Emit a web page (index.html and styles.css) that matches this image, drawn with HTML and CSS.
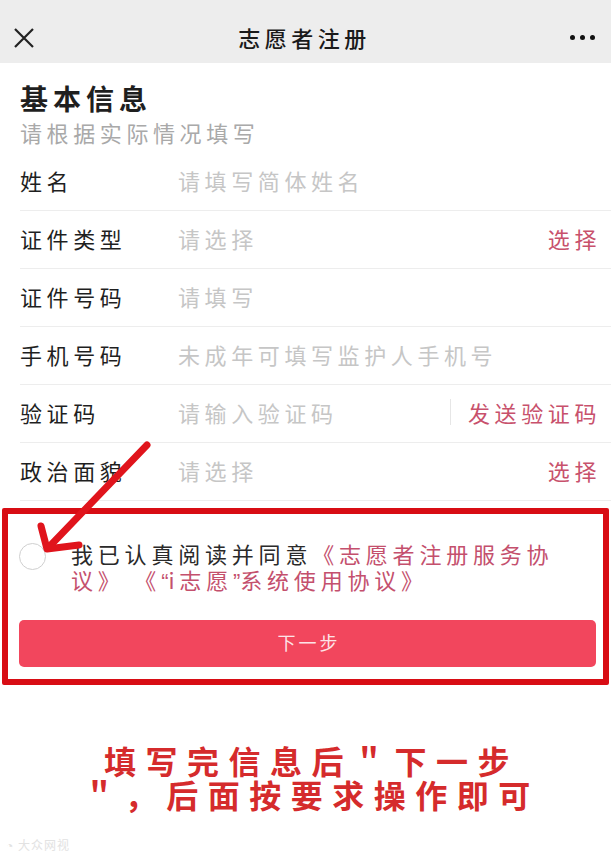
FILE: index.html
```html
<!DOCTYPE html>
<html lang="zh-CN">
<head>
    <meta charset="UTF-8">
    <meta name="viewport" content="width=device-width, initial-scale=1.0">
    <title>志愿者注册</title>
    <link rel="stylesheet" href="styles.css">
</head>
<body>
  <div class="topbar">
    <svg class="close" width="22" height="20" viewBox="0 0 22 20">
      <path d="M2 1 L20 19 M20 1 L2 19" stroke="#222" stroke-width="2.2" fill="none"/>
    </svg>
    <span class="title">志愿者注册</span>
    <span class="dots"><i></i><i></i><i></i></span>
  </div>

  <div class="intro">
    <h2>基本信息</h2>
    <p>请根据实际情况填写</p>
  </div>

  <!-- form rows -->
  <div class="rows">
    <div class="row">
      <span class="label">姓名</span>
      <span class="hint">请填写简体姓名</span>
    </div>
    <div class="row">
      <span class="label">证件类型</span>
      <span class="hint">请选择</span>
      <span class="action">选择</span>
    </div>
    <div class="row">
      <span class="label">证件号码</span>
      <span class="hint">请填写</span>
    </div>
    <div class="row">
      <span class="label">手机号码</span>
      <span class="hint">未成年可填写监护人手机号</span>
    </div>
    <div class="row">
      <span class="label">验证码</span>
      <span class="hint">请输入验证码</span>
      <span class="action send">发送验证码</span>
    </div>
    <div class="row">
      <span class="label">政治面貌</span>
      <span class="hint">请选择</span>
      <span class="action">选择</span>
    </div>
  </div>

  <div class="agree">
    <span class="radio"></span>
    <p class="agree-text">我已认真阅读并同意<span class="link">《志愿者注册服务协议》</span> <span class="link">《<span class="q">“</span>i志愿<span class="q">”</span>系统使用协议》</span></p>
  </div>
  <button class="next">下一步</button>

  <p class="caption">填写完信息后＂下一步<br>＂，后面按要求操作即可</p>
  <div class="watermark">◔ 大众网视</div>

  <!-- annotation overlays -->
  <div class="mark-box"></div>
  <svg class="mark-arrow" width="160" height="120" viewBox="0 440 160 120">
    <path d="M147 445 L48 548" stroke="#e0141c" stroke-width="7" stroke-linecap="round" fill="none"/>
    <path d="M41 526 L47 549 L79 545" stroke="#e0141c" stroke-width="7" stroke-linecap="round" stroke-linejoin="round" fill="none"/>
  </svg>
</body>
</html>
```

FILE: styles.css
```css
body {
  margin: 0;
  width: 611px;
  height: 858px;
  overflow: hidden;
  background: #fff;
  font-family: "Noto Sans CJK SC", "Noto Sans", sans-serif;
  color: #1f1f1f;
}

.topbar {
  height: 63px;
  background: #ededed;
  display: flex;
  align-items: center;
  justify-content: space-between;
  padding: 0 16px 0 13px;
  box-sizing: border-box;
}
.close {
  margin-top: 12px;
}
.title {
  font-size: 22px;
  font-weight: 500;
  letter-spacing: 4.5px;
  padding-left: 4px;
  margin-top: 10px;
  color: #1a1a1a;
}
.dots {
  display: flex;
  gap: 5px;
  margin-top: 12px;
}
.dots i {
  width: 5px;
  height: 5px;
  border-radius: 50%;
  background: #111;
}

.intro {
  padding: 19px 20px 0;
}
.intro h2 {
  margin: 0;
  font-size: 28px;
  line-height: 32px;
  font-weight: 700;
  letter-spacing: 5px;
}
.intro p {
  margin: 4px 0 0;
  font-size: 22px;
  line-height: 28px;
  letter-spacing: 4.6px;
  color: #a9a9a9;
}

.rows {
  margin: 7px 0 0 20px;
}
.row {
  display: flex;
  align-items: center;
  height: 57px;
  border-bottom: 1px solid #ededed;
  padding-right: 10px;
  font-size: 22px;
  line-height: 26px;
  letter-spacing: 4.6px;
}
.row span {
  margin-top: -3px;
}
.label {
  width: 158px;
  flex-shrink: 0;
}
.hint {
  flex: 1;
  color: #c6c6c6;
}
.action {
  color: #c8516c;
}
.send {
  border-left: 1px solid #e6e6e6;
  padding-left: 17px;
}

.agree {
  display: flex;
  align-items: flex-start;
  padding: 39px 0 0 19px;
}
.radio {
  width: 25px;
  height: 25px;
  border: 1px solid #cfcfcf;
  border-radius: 50%;
  margin: 3px 25px 0 0;
  flex-shrink: 0;
}
.agree-text {
  margin: 0;
  width: 500px;
  font-size: 22px;
  line-height: 26px;
  letter-spacing: 4.8px;
  color: #2a2a2a;
}
.link {
  color: #c4506d;
}
.q {
  font-family: "Liberation Sans", sans-serif;
  letter-spacing: 0;
}

.next {
  display: block;
  width: 577px;
  height: 47px;
  margin: 25px 0 0 19px;
  border: none;
  border-radius: 5px;
  background: #f2465d;
  color: #fde3e7;
  font-family: inherit;
  font-size: 18px;
  letter-spacing: 3px;
  padding: 0 0 3px 3px;
}

.caption {
  margin: 76px 0 0;
  text-align: center;
  font-size: 32px;
  line-height: 34px;
  font-weight: 700;
  letter-spacing: 9.5px;
  padding-left: 12px;
  color: #d52b2c;
}
.watermark {
  margin: 26px 0 0 6px;
  font-size: 12px;
  line-height: 16px;
  color: #e2e2e2;
  letter-spacing: 1px;
}

.mark-box {
  position: absolute;
  left: 2px;
  top: 508px;
  width: 607px;
  height: 177px;
  box-sizing: border-box;
  border: 6px solid #d80d14;
  border-radius: 2px;
}
.mark-arrow {
  position: absolute;
  left: 0;
  top: 440px;
}
```
